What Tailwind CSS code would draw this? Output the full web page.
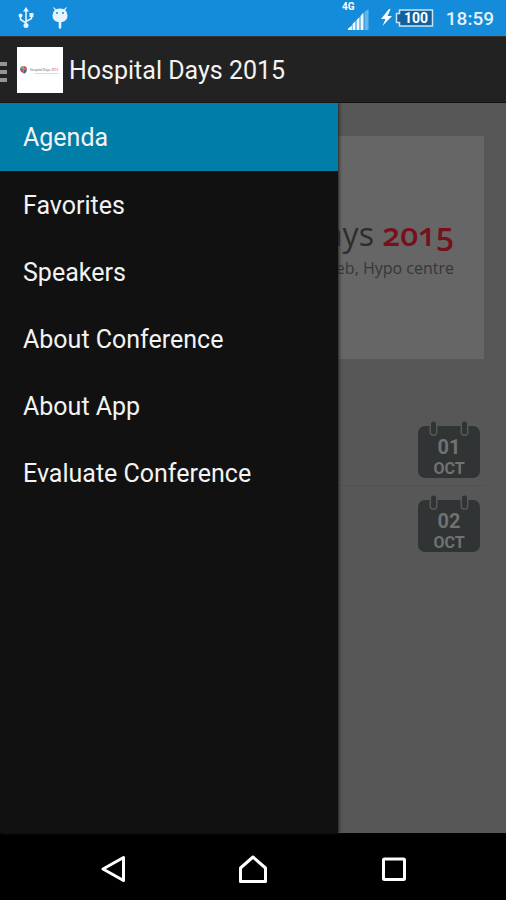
<!DOCTYPE html>
<html lang="en">
<head>
<meta charset="utf-8">
<meta name="viewport" content="width=device-width, initial-scale=1">
<title>Hospital Days 2015</title>
<script src="https://cdn.jsdelivr.net/npm/@tailwindcss/browser@4"></script>
</head>
<body class="flex min-h-screen flex-col bg-black font-['Roboto',sans-serif] text-[#f3f3f3]">

<div class="flex h-9 items-center bg-[#148cd9] pr-3 pl-[18px] text-white">
  <svg class="h-[22px] w-4" viewBox="0 0 16 22" fill="none" stroke="#e4f3fd" stroke-width="1.6" role="img" aria-label="USB connected">
    <path d="M8 4v14M8 16L2.500 12.500V9M8 14.500l5.500-3V8"/>
    <path d="M8 0l3 4.500H5z" fill="#e4f3fd" stroke="none"/>
    <circle cx="8" cy="18.500" r="2.500" fill="#e4f3fd" stroke="none"/>
    <circle cx="2.500" cy="8.500" r="2" fill="#e4f3fd" stroke="none"/>
    <path d="M11.500 6h4v4h-4z" fill="#e4f3fd" stroke="none"/>
  </svg>
  <svg class="ml-[18px] h-[22px] w-4" viewBox="0 0 16 22" role="img" aria-label="Android debugging">
    <path d="M1.500 0L4 2.200Q8 .8 12 2.200L14.500 0l.3.500-1.500 2.800Q15.500 5 15.500 8.500q0 5-5 6.500H9.300v5.500q0 1.200-1.300 1.200t-1.300-1.200V15H5.500q-5-1.500-5-6.500Q.5 5 2.700 3.300L1.200.500z" fill="#e4f3fd"/>
    <circle cx="5" cy="6" r="1" fill="#148cd9"/><circle cx="11" cy="6" r="1" fill="#148cd9"/>
  </svg>
  <svg class="ml-auto h-8 w-7" viewBox="0 0 28 32" role="img" aria-label="4G signal">
    <text x="1" y="8" fill="#fff" font-family="Roboto, sans-serif" font-size="10" font-weight="700">4G</text>
    <path d="M7 28v-1.500l4-3V28zM11.500 28v-6l3-3v9zM15.500 28V18l3-3v13zM19.500 28V14l3-3.500V28z" fill="#f2f9fe"/>
    <path d="M23.500 28V10l4-3v21z" fill="#65b5e8"/>
  </svg>
  <svg class="ml-3 h-[18px] w-[53px]" viewBox="0 0 53 18" role="img" aria-label="Battery charging">
    <path d="M8 0L0 10h4.500L1.500 17 11 7H6.500L9.500 0z" fill="#fff"/>
    <path d="M18.500 1h33v16h-33v-3.500h-3v-9h3z" fill="#14609a" stroke="#c9e4f6" stroke-width="1.500"/>
    <text x="35" y="14" text-anchor="middle" fill="#fff" font-family="Roboto, sans-serif" font-size="14" font-weight="700">100</text>
  </svg>
  <time class="ml-3 pt-px text-[19px] leading-6 font-medium text-[#e4f3fd]">18:59</time>
</div>

<header class="flex h-[67px] items-center border-y border-t-[#3a3530] border-b-[#111] bg-[#222]">
  <button type="button" aria-label="Toggle menu" class="flex w-[17px] flex-col gap-1 pt-1">
    <span class="h-[4px] w-[7px] bg-[#959595]"></span>
    <span class="h-[4px] w-[7px] bg-[#959595]"></span>
    <span class="h-[4px] w-[7px] bg-[#959595]"></span>
  </button>
  <svg class="size-[46px]" viewBox="0 0 46 46" aria-hidden="true">
    <path d="M0 0h46v46H0z" fill="#fff"/>
    <path d="M3 22q0-3 3.500-3v3z" fill="#69a18a"/><path d="M6.500 19q3.500 0 3.500 3.500H6.500z" fill="#d5573b"/>
    <path d="M3 22h3.500v4Q3 25 3 22z" fill="#c34b76"/><path d="M6.500 22.500H10Q9.500 26 6.500 27z" fill="#3f6a86"/>
    <text x="13" y="24" font-family="Open Sans, sans-serif" font-size="3.200" fill="#555">Hospital Days <tspan fill="#d33">2015</tspan></text>
    <path d="M17 26.500h25" stroke="#ddd" stroke-width="1"/>
  </svg>
  <h1 class="ml-[6px] pt-0.5 text-[25px] leading-8">Hospital Days 2015</h1>
</header>

<div class="relative flex grow flex-col bg-[#575757]">
  <main class="flex flex-col pt-[33px]">
    <div class="mx-[22px] flex h-[223px] flex-col items-end overflow-hidden bg-[#666] pt-[76px] pr-[30px] font-['Open_Sans',sans-serif] whitespace-nowrap">
      <p class="text-[32px] leading-[44px] font-medium text-[#2d2d2d] oldstyle-nums">Hospital Days <span class="font-semibold text-[#77101a]">2015</span></p>
      <p class="text-base leading-6 font-medium text-[#373737]">Zagreb, Hypo centre</p>
    </div>
    <ul class="mt-[53px] px-[22px]">
      <li class="flex h-[74px] items-start justify-end border-b border-[#515151] pt-2 pr-1">
        <time datetime="2015-10-01" class="relative flex h-[58px] w-[62px] flex-col items-center pt-[15px] font-bold text-[#707272]">
          <svg class="absolute inset-0 size-full" viewBox="0 0 62 58" aria-hidden="true">
            <rect y="6" width="62" height="52" rx="7" fill="#313435"/>
            <g stroke-linecap="round"><path d="M15.500 5v7M46.500 5v7" stroke="#575757" stroke-width="8"/><path d="M15.500 4v8M46.500 4v8" stroke="#313435" stroke-width="5"/></g>
          </svg>
          <span class="relative text-xl leading-6">01</span>
          <span class="relative text-base leading-5">OCT</span>
        </time>
      </li>
      <li class="flex h-[74px] items-start justify-end pt-2 pr-1">
        <time datetime="2015-10-02" class="relative flex h-[58px] w-[62px] flex-col items-center pt-[15px] font-bold text-[#707272]">
          <svg class="absolute inset-0 size-full" viewBox="0 0 62 58" aria-hidden="true">
            <rect y="6" width="62" height="52" rx="7" fill="#313435"/>
            <g stroke-linecap="round"><path d="M15.500 5v7M46.500 5v7" stroke="#575757" stroke-width="8"/><path d="M15.500 4v8M46.500 4v8" stroke="#313435" stroke-width="5"/></g>
          </svg>
          <span class="relative text-xl leading-6">02</span>
          <span class="relative text-base leading-5">OCT</span>
        </time>
      </li>
    </ul>
  </main>

  <nav aria-label="Main menu" class="absolute inset-y-0 left-0 w-[338px] bg-[#111] text-[25px] leading-8 shadow-[1px_0_3px_#222]">
    <a href="#agenda" aria-current="page" class="flex h-[68px] items-center bg-[#007ea8] px-[23px] pt-0.5">Agenda</a>
    <a href="#favorites" class="flex h-[67px] items-center px-[23px] pt-0.5">Favorites</a>
    <a href="#speakers" class="flex h-[67px] items-center px-[23px] pt-0.5">Speakers</a>
    <a href="#conference" class="flex h-[67px] items-center px-[23px] pt-0.5">About Conference</a>
    <a href="#app" class="flex h-[67px] items-center px-[23px] pt-0.5">About App</a>
    <a href="#evaluate" class="flex h-[67px] items-center px-[23px] pt-0.5">Evaluate Conference</a>
  </nav>
</div>

<footer class="flex h-[67px] items-center justify-center gap-[109px] bg-black pt-1">
  <button type="button" aria-label="Back"><svg class="size-8" viewBox="0 0 32 32" fill="none" stroke="#fff" stroke-width="3"><path d="M27.500 4.500v23L7 16z" stroke-linejoin="round"/></svg></button>
  <button type="button" aria-label="Home"><svg class="size-8" viewBox="0 0 32 32" fill="none" stroke="#fff" stroke-width="3"><path d="M16 4L28.500 15v13.500h-25V15z" stroke-linejoin="round"/></svg></button>
  <button type="button" aria-label="Recent apps"><svg class="size-8" viewBox="0 0 32 32" fill="none" stroke="#fff" stroke-width="3"><rect x="5.500" y="6" width="21" height="20.500" rx="1"/></svg></button>
</footer>
</body>
</html>
